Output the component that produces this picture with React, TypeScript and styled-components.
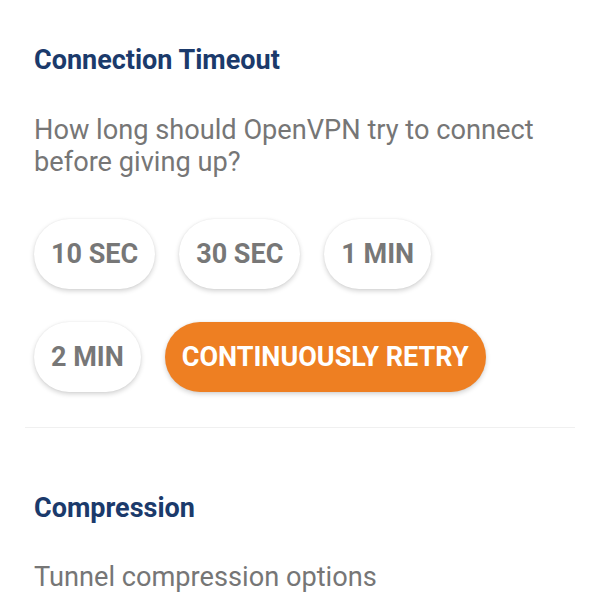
import React from "react";
import styled, { createGlobalStyle } from "styled-components";

const Global = createGlobalStyle`
  html, body { margin: 0; padding: 0; background: #ffffff; }
  body { font-family: Roboto, "Noto Sans", sans-serif; -webkit-font-smoothing: antialiased; }
`;

const Page = styled.div`
  width: 600px;
  height: 600px;
  overflow: hidden;
  background: #ffffff;
  display: flex;
  flex-direction: column;
`;

const Section = styled.section<{ $top: number }>`
  display: flex;
  flex-direction: column;
  padding: ${(p) => p.$top}px 34px 0;
`;

const Title = styled.h2`
  margin: 0;
  font-family: Roboto, sans-serif;
  font-weight: 700;
  font-size: 27px;
  line-height: 32px;
  color: #1b3a6b;
`;

const Description = styled.p<{ $gap?: number }>`
  margin: ${(p) => p.$gap ?? 38}px 0 0;
  font-family: Roboto, sans-serif;
  font-weight: 400;
  font-size: 27.2px;
  line-height: 32px;
  color: #767676;
`;

const Options = styled.div`
  display: flex;
  flex-wrap: wrap;
  column-gap: 24px;
  row-gap: 33px;
  margin-top: 41px;
  max-width: 480px;
`;

const Chip = styled.button<{ $active?: boolean }>`
  height: 70px;
  padding: 0 17px;
  border: none;
  border-radius: 35px;
  font-family: Roboto, sans-serif;
  font-weight: 700;
  font-size: 27px;
  background: ${(p) => (p.$active ? "#ee7f22" : "#ffffff")};
  color: ${(p) => (p.$active ? "#ffffff" : "#777777")};
  box-shadow: 0 2px 5px rgba(0, 0, 0, 0.18), 0 0 2px rgba(0, 0, 0, 0.06);
  cursor: pointer;
`;

const Divider = styled.hr`
  margin: 35px 25px 0;
  border: none;
  height: 1px;
  background: #f0f0f0;
`;

const options = ["10 SEC", "30 SEC", "1 MIN", "2 MIN", "CONTINUOUSLY RETRY"];

export default function App() {
  return (
    <Page>
      <Global />
      <Section $top={44}>
        <Title>Connection Timeout</Title>
        <Description>
          How long should OpenVPN try to connect
          <br />
          before giving up?
        </Description>
        <Options>
          {options.map((o) => (
            <Chip key={o} $active={o === "CONTINUOUSLY RETRY"}>
              {o}
            </Chip>
          ))}
        </Options>
      </Section>
      <Divider />
      <Section $top={64}>
        <Title>Compression</Title>
        <Description $gap={37}>Tunnel compression options</Description>
      </Section>
    </Page>
  );
}
